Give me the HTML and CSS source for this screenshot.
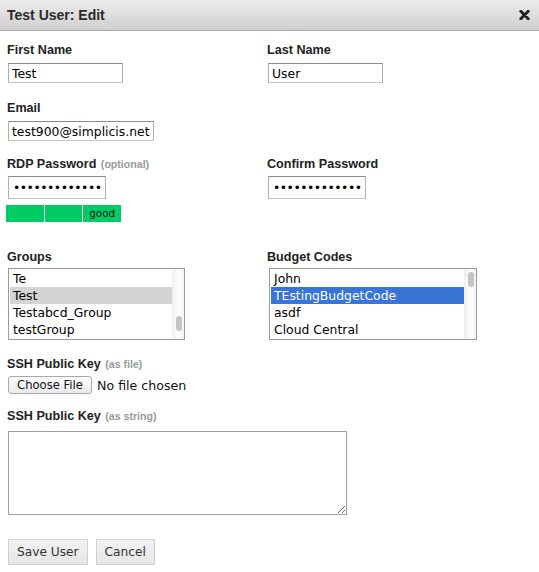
FILE: index.html
```html
<!DOCTYPE html>
<html>
<head>
<meta charset="utf-8">
<link rel="stylesheet" href="styles.css">
</head>
<body>
<div class="dialog">
  <div class="titlebar">
    <h1 class="title">Test User: Edit</h1>
    <svg class="close" width="11" height="10" viewBox="0 0 11 10"><path d="M1.8 1.3 L9.2 8.7 M9.2 1.3 L1.8 8.7" stroke="#222" stroke-width="3" stroke-linecap="round"/></svg>
  </div>
  <form class="body">
    <div class="row">
      <div class="field f-name">
        <label class="lbl">First Name</label>
        <input class="txt w-name" type="text" value="Test">
      </div>
      <div class="field f-name">
        <label class="lbl">Last Name</label>
        <input class="txt w-name" type="text" value="User">
      </div>
    </div>
    <div class="field f-email">
      <label class="lbl">Email</label>
      <input class="txt w-email" type="text" value="test900@simplicis.net">
    </div>
    <div class="row">
      <div class="field">
        <label class="lbl">RDP Password <span class="hint">(optional)</span></label>
        <input class="txt pw" type="password" value="aaaaaaaaaaaaaaaa">
        <div class="strength"><span class="seg"></span><span class="seg"></span><span class="seg">good</span></div>
      </div>
      <div class="field">
        <label class="lbl">Confirm Password</label>
        <input class="txt pw" type="password" value="aaaaaaaaaaaaaaaa">
      </div>
    </div>
    <div class="row lists">
      <div class="field">
        <label class="lbl">Groups</label>
        <div class="listbox w-groups">
          <div class="items">
            <div class="opt">Te</div>
            <div class="opt sel-gray">Test</div>
            <div class="opt">Testabcd_Group</div>
            <div class="opt">testGroup</div>
          </div>
          <div class="sbar"><span class="thumb thumb-bottom"></span></div>
        </div>
      </div>
      <div class="field">
        <label class="lbl">Budget Codes</label>
        <div class="listbox w-budget">
          <div class="items">
            <div class="opt">John</div>
            <div class="opt sel-blue">TEstingBudgetCode</div>
            <div class="opt">asdf</div>
            <div class="opt">Cloud Central</div>
          </div>
          <div class="sbar"><span class="thumb thumb-top"></span></div>
        </div>
      </div>
    </div>
    <div class="field f-file">
      <label class="lbl">SSH Public Key <span class="hint">(as file)</span></label>
      <div class="filerow">
        <button type="button" class="filebtn">Choose File</button>
        <span class="nofile">No file chosen</span>
      </div>
    </div>
    <div class="field f-string">
      <label class="lbl">SSH Public Key <span class="hint">(as string)</span></label>
      <textarea class="area"></textarea>
    </div>
    <div class="actions">
      <button type="button" class="btn">Save User</button>
      <button type="button" class="btn">Cancel</button>
    </div>
  </form>
</div>
</body>
</html>
```
FILE: styles.css
```css
html, body {
  margin: 0;
  padding: 0;
  background: #fff;
}
body {
  font-family: "Liberation Sans", Arial, sans-serif;
  color: #222;
}
.titlebar {
  height: 30px;
  border-bottom: 1px solid #a9a9a9;
  background: linear-gradient(#ececec, #cfcfcf);
  display: flex;
  align-items: center;
  justify-content: space-between;
  padding: 0 9px 0 7px;
}
.title {
  margin: 0;
  font-size: 14px;
  font-weight: bold;
  line-height: 30px;
  color: #2a2a2a;
}
.close {
  display: block;
}
.body {
  padding: 12px 7px 0 7px;
  margin: 0;
}
.row {
  display: grid;
  grid-template-columns: 260px 1fr;
}
.field {
  display: flex;
  flex-direction: column;
  align-items: flex-start;
}
.lbl {
  display: block;
  font-size: 12.6px;
  font-weight: bold;
  line-height: 14px;
  color: #222;
}
.hint {
  font-size: 10.6px;
  color: #999;
  margin-left: 1px;
}
.txt {
  box-sizing: border-box;
  height: 20px;
  margin: 6px 0 0 1px;
  padding: 0 3px;
  border: 1px solid #c4c4c4;
  border-top-color: #8c8c8c;
  border-left-color: #b0b0b0;
  border-right-color: #b0b0b0;
  border-radius: 0;
  font-family: "DejaVu Sans", sans-serif;
  font-size: 12.4px;
  color: #000;
  background: #fff;
  outline: none;
}
.w-name { width: 115px; }
.f-name { margin-bottom: 18px; }
.w-email { width: 146px; }
.f-email { margin-bottom: 16px; }
.pw {
  width: 98px;
  height: 23px;
  margin-top: 5px;
  letter-spacing: -0.5px;
  padding-left: 4px;
}
.strength {
  display: flex;
  gap: 1px;
  width: 115px;
  height: 17px;
  margin: 6px 0 0 -1px;
}
.seg {
  flex: 1;
  background: #00cc66;
  font-family: "DejaVu Sans", sans-serif;
  font-size: 10.4px;
  line-height: 17px;
  text-align: center;
  color: #111;
}
.lists {
  margin-top: 28px;
}
.listbox {
  box-sizing: border-box;
  display: flex;
  height: 72px;
  margin: 4px 0 0 1px;
  border: 1px solid #9a9a9a;
  background: #fff;
}
.w-groups { width: 177px; }
.w-budget { width: 208px; margin-left: 2px; }
.items {
  flex: 1;
  padding: 1px 0 0 1px;
}
.opt {
  height: 17px;
  line-height: 17px;
  padding-left: 3px;
  font-family: "DejaVu Sans", sans-serif;
  font-size: 12.4px;
  color: #000;
  white-space: nowrap;
}
.sel-gray { background: #d4d4d4; }
.sel-blue { background: #3875d7; color: #fff; }
.sbar {
  position: relative;
  width: 11px;
  border-left: 1px solid #ececec;
  background: linear-gradient(90deg, #f3f3f3, #fcfcfc 50%, #f3f3f3);
}
.thumb {
  position: absolute;
  left: 3px;
  width: 6px;
  height: 15px;
  border-radius: 3px;
  background: #c4c4c4;
}
.thumb-bottom { top: 47px; }
.thumb-top { top: 3px; }
.f-file {
  margin-top: 17px;
}
.filerow {
  display: flex;
  align-items: center;
  margin: 5px 0 0 1px;
}
.filebtn {
  box-sizing: border-box;
  height: 18px;
  width: 84px;
  padding: 0;
  border: 1px solid #a9a9a9;
  border-radius: 3px;
  background: linear-gradient(#ffffff, #e9e9e9);
  font-family: "DejaVu Sans", sans-serif;
  font-size: 11.6px;
  color: #111;
  line-height: 16px;
}
.nofile {
  margin-left: 5px;
  font-family: "DejaVu Sans", sans-serif;
  font-size: 12.6px;
  color: #111;
}
.f-string {
  margin-top: 15px;
}
.area {
  box-sizing: border-box;
  width: 339px;
  height: 84px;
  margin: 8px 0 0 1px;
  border: 1px solid #9f9f9f;
  padding: 2px;
  resize: both;
  font-family: "DejaVu Sans", sans-serif;
  font-size: 12px;
}
.actions {
  display: flex;
  gap: 8px;
  margin: 24px 0 0 1px;
}
.btn {
  box-sizing: border-box;
  height: 26px;
  padding: 0 8px;
  border: 1px solid #cfcfcf;
  background: linear-gradient(#f2f2f2, #e6e6e6);
  font-family: "DejaVu Sans", sans-serif;
  font-size: 12.2px;
  color: #333;
  border-radius: 0;
}
```
